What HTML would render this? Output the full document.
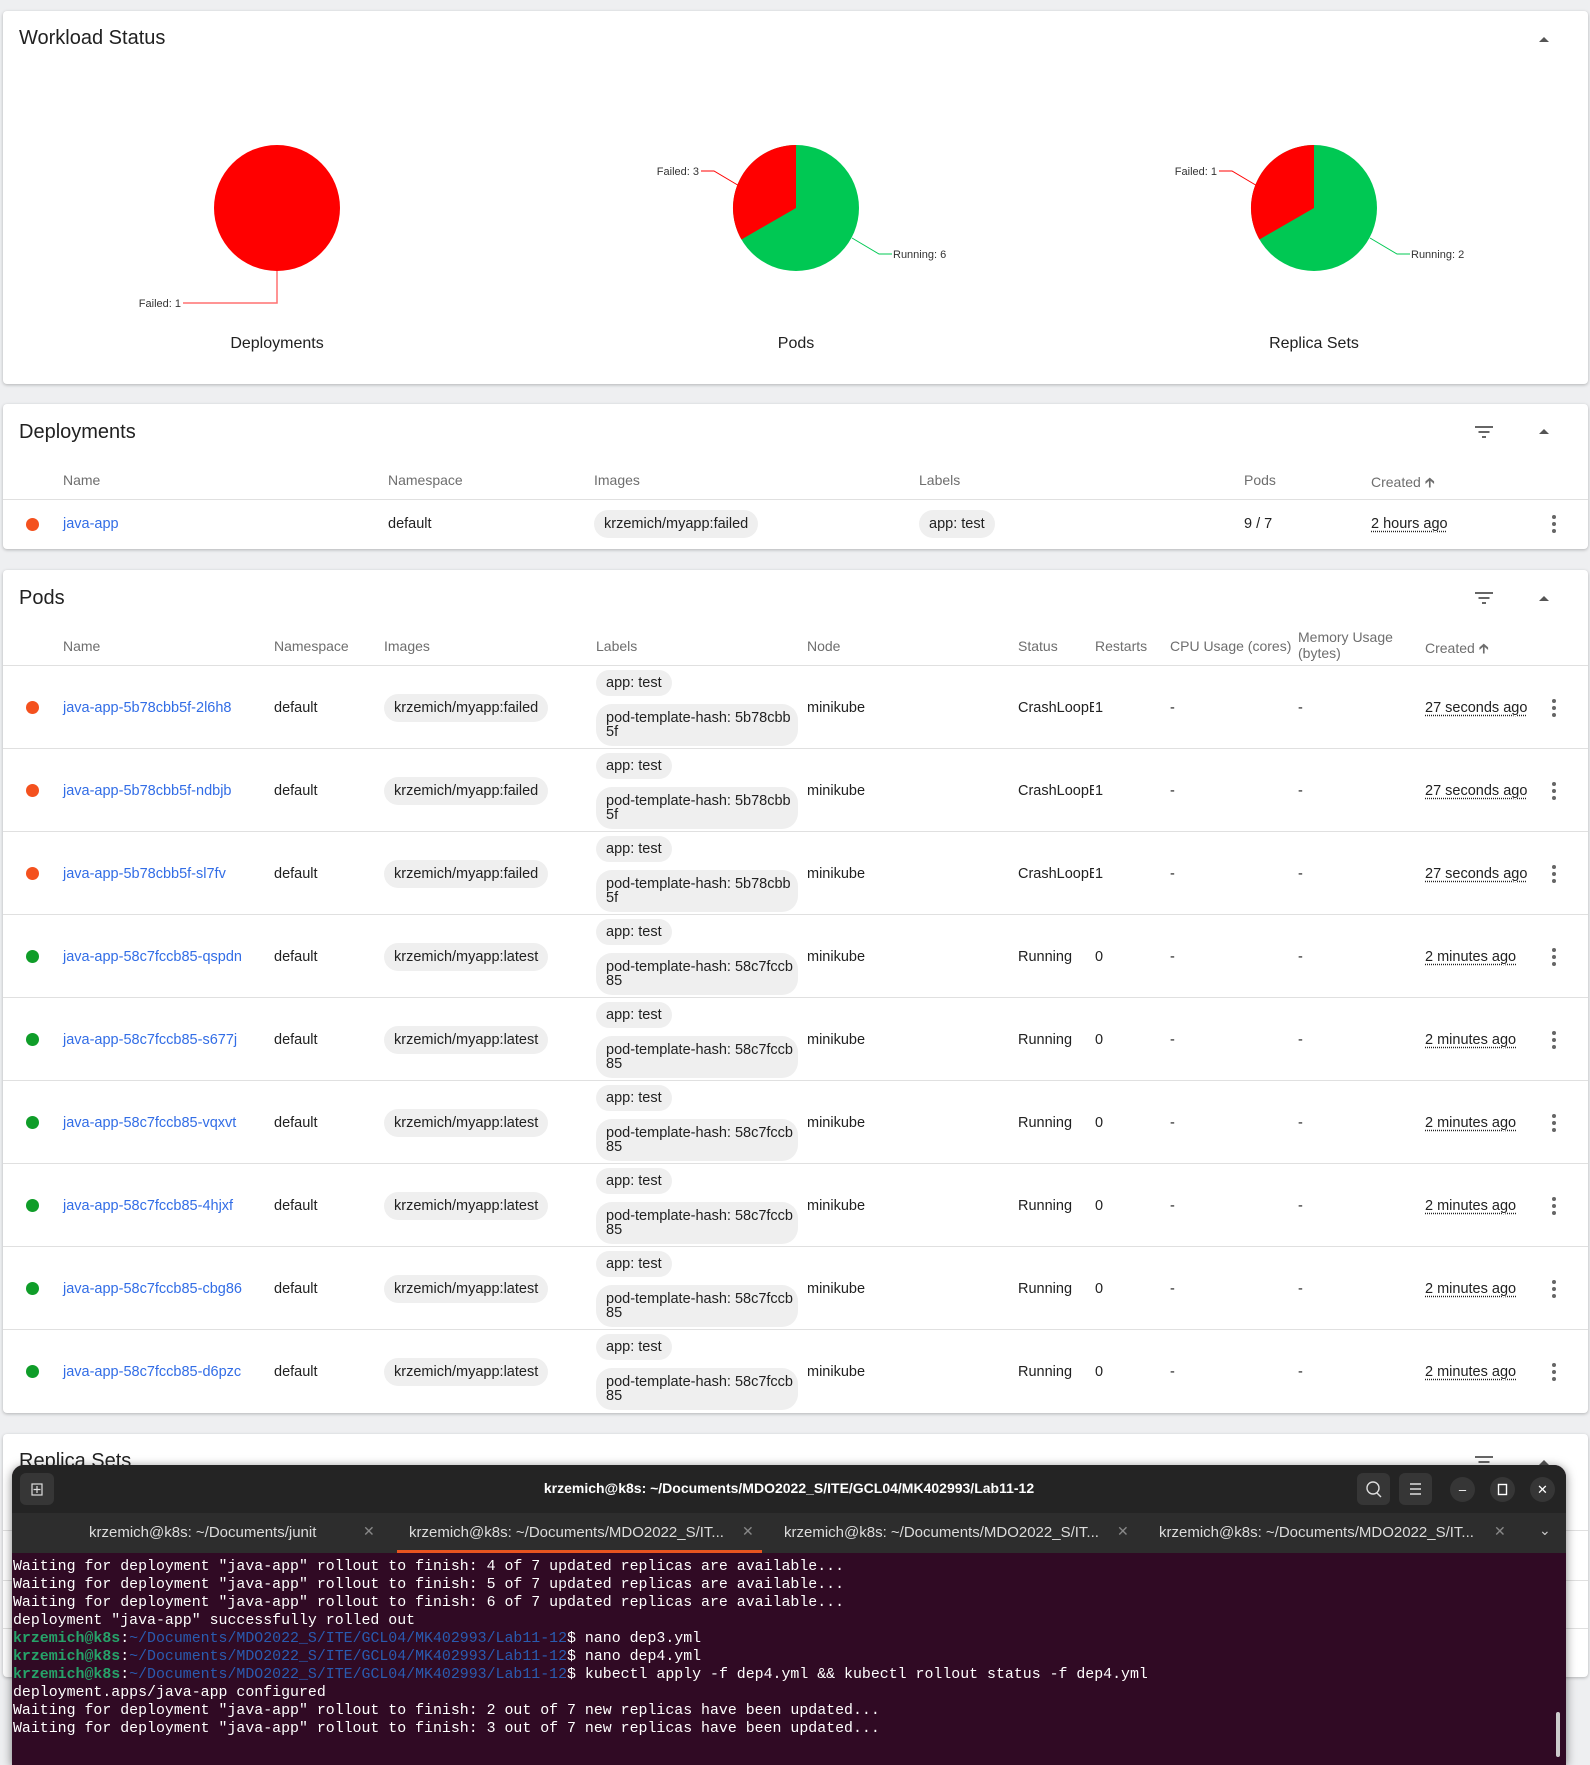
<!DOCTYPE html>
<html><head><meta charset="utf-8">
<style>
*{box-sizing:border-box;margin:0;padding:0}
body{width:1590px;height:1753px;background:#eeeff1;position:relative;overflow:hidden;font-family:"Liberation Sans",Arial,sans-serif;color:#212121}
.card{position:absolute;left:3px;width:1585px;background:#fff;border-radius:4px;box-shadow:0 1px 3px rgba(0,0,0,.25)}
.title{position:absolute;left:16px;font-size:20px;color:#212121}
.abs{position:absolute;white-space:nowrap}
.hd{position:absolute;font-size:14px;color:#6e6e6e;white-space:nowrap}
.div{position:absolute;left:0;right:0;height:1px;background:#e0e0e0}
.up{position:absolute;width:0;height:0;border-left:5px solid transparent;border-right:5px solid transparent;border-bottom:5px solid #555}
.filt{position:absolute;width:18px;height:12px}
.filt i{position:absolute;height:2px;background:#666;left:50%;transform:translateX(-50%)}
.row{position:absolute;left:0;width:1585px;height:83px;border-bottom:1px solid #e0e0e0;font-size:14.5px}
.row>div{position:absolute;white-space:nowrap}
.dot{width:13px;height:13px;border-radius:50%;left:23px;top:35px}
.red{background:#f4511e}.grn{background:#0f9d29}
.t{top:32px;line-height:20px}
.lnk{color:#326de6}
.chip{background:#efefef;border-radius:14px;padding:0 10px;line-height:28px;height:28px}
.kb{left:1549px;top:33px;width:4px;height:18px}
.kb i{display:block;width:4px;height:4px;border-radius:50%;background:#666;margin-bottom:3px}
.dt{text-decoration:underline dotted;text-underline-offset:3px}
.term{position:absolute;left:12px;top:1465px;width:1554px;height:300px;background:#300a24;border-radius:12px 12px 0 0;overflow:hidden;box-shadow:0 2px 10px rgba(0,0,0,.5)}
.tb{position:absolute;left:0;top:0;width:100%;height:48px;background:#242424}
.tabs{position:absolute;left:0;top:48px;width:100%;height:40px;background:#2d2d2d;color:#ddd;font-size:15px}
.tab{position:absolute;top:11px;white-space:nowrap}
.x{position:absolute;top:10px;color:#888;font-size:14px}
pre{position:absolute;left:1px;top:93px;font-family:"Liberation Mono",monospace;font-size:14.9px;line-height:18px;color:#fff}
.g{color:#26a269;font-weight:bold}.b{color:#2a5bb0}
.btn{position:absolute;top:8px;width:33px;height:32px;border-radius:6px;background:#363636}
.cb{position:absolute;top:12px;width:25px;height:25px;border-radius:50%;background:#363636;color:#fff;font-size:13px;text-align:center;line-height:25px}
</style></head><body>

<div class="card" style="top:11px;height:373px">
  <div class="title" style="top:16px">Workload Status</div>
  <div class="up" style="left:1536px;top:26px"></div>
  <svg class="abs" style="left:0;top:0" width="1585" height="373" font-family="Liberation Sans, Arial, sans-serif" font-size="11">
    <circle cx="274" cy="197" r="63" fill="#ff0000"/>
    <polyline points="274,260 274,292 180,292" fill="none" stroke="#ff7070" stroke-width="1.5"/>
    <text x="178" y="296" text-anchor="end" fill="#333">Failed: 1</text>
    <g transform="translate(793,197)">
      <circle r="63" fill="#00c853"/>
      <path d="M0,0 L0,-63 A63,63 0 0 0 -54.6,31.5 Z" fill="#ff0000"/>
      <polyline points="-55,-21 -82,-37 -95,-37" fill="none" stroke="#ff0000"/>
      <text x="-97" y="-33" text-anchor="end" fill="#333">Failed: 3</text>
      <polyline points="56,30 83,46 96,46" fill="none" stroke="#00c853"/>
      <text x="97" y="50" fill="#333">Running: 6</text>
    </g>
    <g transform="translate(1311,197)">
      <circle r="63" fill="#00c853"/>
      <path d="M0,0 L0,-63 A63,63 0 0 0 -54.6,31.5 Z" fill="#ff0000"/>
      <polyline points="-55,-21 -82,-37 -95,-37" fill="none" stroke="#ff0000"/>
      <text x="-97" y="-33" text-anchor="end" fill="#333">Failed: 1</text>
      <polyline points="56,30 83,46 96,46" fill="none" stroke="#00c853"/>
      <text x="97" y="50" fill="#333">Running: 2</text>
    </g>
    <g font-size="16" fill="#212121" text-anchor="middle">
      <text x="274" y="337">Deployments</text>
      <text x="793" y="337">Pods</text>
      <text x="1311" y="337">Replica Sets</text>
    </g>
  </svg>
</div>

<div class="card" style="top:404px;height:145px">
  <div class="title" style="top:17px">Deployments</div>
  <div class="filt" style="left:1472px;top:22px"><i style="top:0;width:18px"></i><i style="top:5px;width:11px"></i><i style="top:10px;width:4px"></i></div>
  <div class="up" style="left:1536px;top:25px"></div>
  <div class="hd" style="left:60px;top:68px">Name</div>
  <div class="hd" style="left:385px;top:68px">Namespace</div>
  <div class="hd" style="left:591px;top:68px">Images</div>
  <div class="hd" style="left:916px;top:68px">Labels</div>
  <div class="hd" style="left:1241px;top:68px">Pods</div>
  <div class="hd" style="left:1368px;top:68px">Created &#129137;</div>
  <div class="div" style="top:95px"></div>
  <div class="row" style="top:96px;height:49px;border-bottom:0">
    <div class="dot red" style="top:18px"></div>
    <div class="lnk" style="left:60px;top:14px;line-height:20px">java-app</div>
    <div style="left:385px;top:14px;line-height:20px">default</div>
    <div class="chip" style="left:591px;top:10px">krzemich/myapp:failed</div>
    <div class="chip" style="left:916px;top:10px">app: test</div>
    <div style="left:1241px;top:14px;line-height:20px">9 / 7</div>
    <div class="dt" style="left:1368px;top:14px;line-height:20px">2 hours ago</div>
    <div class="kb" style="top:15px"><i></i><i></i><i></i></div>
  </div>
</div>

<div class="card" style="top:570px;height:843px">
  <div class="title" style="top:17px">Pods</div>
  <div class="filt" style="left:1472px;top:22px"><i style="top:0;width:18px"></i><i style="top:5px;width:11px"></i><i style="top:10px;width:4px"></i></div>
  <div class="up" style="left:1536px;top:26px"></div>
  <div class="hd" style="left:60px;top:68px">Name</div>
  <div class="hd" style="left:271px;top:68px">Namespace</div>
  <div class="hd" style="left:381px;top:68px">Images</div>
  <div class="hd" style="left:593px;top:68px">Labels</div>
  <div class="hd" style="left:804px;top:68px">Node</div>
  <div class="hd" style="left:1015px;top:68px">Status</div>
  <div class="hd" style="left:1092px;top:68px">Restarts</div>
  <div class="hd" style="left:1167px;top:68px">CPU Usage (cores)</div>
  <div class="hd" style="left:1295px;top:59px;line-height:16px">Memory Usage<br>(bytes)</div>
  <div class="hd" style="left:1422px;top:68px">Created &#129137;</div>
  <div class="div" style="top:95px"></div>

  <div class="row" style="top:96px"><div class="dot red"></div><div class="t lnk" style="left:60px">java-app-5b78cbb5f-2l6h8</div><div class="t" style="left:271px">default</div><div class="chip" style="left:381px;top:28px">krzemich/myapp:failed</div><div class="chip" style="left:593px;top:4px;height:26px;line-height:26px">app: test</div><div class="chip" style="left:593px;top:38px;height:42px;line-height:14px;padding-top:7px;width:202px;border-radius:16px">pod-template-hash: 5b78cbb<br>5f</div><div class="t" style="left:804px">minikube</div><div class="t" style="left:1015px;width:76px;overflow:hidden">CrashLoopBackOff</div><div class="t" style="left:1092px">1</div><div class="t" style="left:1167px">-</div><div class="t" style="left:1295px">-</div><div class="t dt" style="left:1422px">27 seconds ago</div><div class="kb"><i></i><i></i><i></i></div></div>

  <div class="row" style="top:179px"><div class="dot red"></div><div class="t lnk" style="left:60px">java-app-5b78cbb5f-ndbjb</div><div class="t" style="left:271px">default</div><div class="chip" style="left:381px;top:28px">krzemich/myapp:failed</div><div class="chip" style="left:593px;top:4px;height:26px;line-height:26px">app: test</div><div class="chip" style="left:593px;top:38px;height:42px;line-height:14px;padding-top:7px;width:202px;border-radius:16px">pod-template-hash: 5b78cbb<br>5f</div><div class="t" style="left:804px">minikube</div><div class="t" style="left:1015px;width:76px;overflow:hidden">CrashLoopBackOff</div><div class="t" style="left:1092px">1</div><div class="t" style="left:1167px">-</div><div class="t" style="left:1295px">-</div><div class="t dt" style="left:1422px">27 seconds ago</div><div class="kb"><i></i><i></i><i></i></div></div>

  <div class="row" style="top:262px"><div class="dot red"></div><div class="t lnk" style="left:60px">java-app-5b78cbb5f-sl7fv</div><div class="t" style="left:271px">default</div><div class="chip" style="left:381px;top:28px">krzemich/myapp:failed</div><div class="chip" style="left:593px;top:4px;height:26px;line-height:26px">app: test</div><div class="chip" style="left:593px;top:38px;height:42px;line-height:14px;padding-top:7px;width:202px;border-radius:16px">pod-template-hash: 5b78cbb<br>5f</div><div class="t" style="left:804px">minikube</div><div class="t" style="left:1015px;width:76px;overflow:hidden">CrashLoopBackOff</div><div class="t" style="left:1092px">1</div><div class="t" style="left:1167px">-</div><div class="t" style="left:1295px">-</div><div class="t dt" style="left:1422px">27 seconds ago</div><div class="kb"><i></i><i></i><i></i></div></div>

  <div class="row" style="top:345px"><div class="dot grn"></div><div class="t lnk" style="left:60px">java-app-58c7fccb85-qspdn</div><div class="t" style="left:271px">default</div><div class="chip" style="left:381px;top:28px">krzemich/myapp:latest</div><div class="chip" style="left:593px;top:4px;height:26px;line-height:26px">app: test</div><div class="chip" style="left:593px;top:38px;height:42px;line-height:14px;padding-top:7px;width:202px;border-radius:16px">pod-template-hash: 58c7fccb<br>85</div><div class="t" style="left:804px">minikube</div><div class="t" style="left:1015px">Running</div><div class="t" style="left:1092px">0</div><div class="t" style="left:1167px">-</div><div class="t" style="left:1295px">-</div><div class="t dt" style="left:1422px">2 minutes ago</div><div class="kb"><i></i><i></i><i></i></div></div>

  <div class="row" style="top:428px"><div class="dot grn"></div><div class="t lnk" style="left:60px">java-app-58c7fccb85-s677j</div><div class="t" style="left:271px">default</div><div class="chip" style="left:381px;top:28px">krzemich/myapp:latest</div><div class="chip" style="left:593px;top:4px;height:26px;line-height:26px">app: test</div><div class="chip" style="left:593px;top:38px;height:42px;line-height:14px;padding-top:7px;width:202px;border-radius:16px">pod-template-hash: 58c7fccb<br>85</div><div class="t" style="left:804px">minikube</div><div class="t" style="left:1015px">Running</div><div class="t" style="left:1092px">0</div><div class="t" style="left:1167px">-</div><div class="t" style="left:1295px">-</div><div class="t dt" style="left:1422px">2 minutes ago</div><div class="kb"><i></i><i></i><i></i></div></div>

  <div class="row" style="top:511px"><div class="dot grn"></div><div class="t lnk" style="left:60px">java-app-58c7fccb85-vqxvt</div><div class="t" style="left:271px">default</div><div class="chip" style="left:381px;top:28px">krzemich/myapp:latest</div><div class="chip" style="left:593px;top:4px;height:26px;line-height:26px">app: test</div><div class="chip" style="left:593px;top:38px;height:42px;line-height:14px;padding-top:7px;width:202px;border-radius:16px">pod-template-hash: 58c7fccb<br>85</div><div class="t" style="left:804px">minikube</div><div class="t" style="left:1015px">Running</div><div class="t" style="left:1092px">0</div><div class="t" style="left:1167px">-</div><div class="t" style="left:1295px">-</div><div class="t dt" style="left:1422px">2 minutes ago</div><div class="kb"><i></i><i></i><i></i></div></div>

  <div class="row" style="top:594px"><div class="dot grn"></div><div class="t lnk" style="left:60px">java-app-58c7fccb85-4hjxf</div><div class="t" style="left:271px">default</div><div class="chip" style="left:381px;top:28px">krzemich/myapp:latest</div><div class="chip" style="left:593px;top:4px;height:26px;line-height:26px">app: test</div><div class="chip" style="left:593px;top:38px;height:42px;line-height:14px;padding-top:7px;width:202px;border-radius:16px">pod-template-hash: 58c7fccb<br>85</div><div class="t" style="left:804px">minikube</div><div class="t" style="left:1015px">Running</div><div class="t" style="left:1092px">0</div><div class="t" style="left:1167px">-</div><div class="t" style="left:1295px">-</div><div class="t dt" style="left:1422px">2 minutes ago</div><div class="kb"><i></i><i></i><i></i></div></div>

  <div class="row" style="top:677px"><div class="dot grn"></div><div class="t lnk" style="left:60px">java-app-58c7fccb85-cbg86</div><div class="t" style="left:271px">default</div><div class="chip" style="left:381px;top:28px">krzemich/myapp:latest</div><div class="chip" style="left:593px;top:4px;height:26px;line-height:26px">app: test</div><div class="chip" style="left:593px;top:38px;height:42px;line-height:14px;padding-top:7px;width:202px;border-radius:16px">pod-template-hash: 58c7fccb<br>85</div><div class="t" style="left:804px">minikube</div><div class="t" style="left:1015px">Running</div><div class="t" style="left:1092px">0</div><div class="t" style="left:1167px">-</div><div class="t" style="left:1295px">-</div><div class="t dt" style="left:1422px">2 minutes ago</div><div class="kb"><i></i><i></i><i></i></div></div>

  <div class="row" style="top:760px;border-bottom:0"><div class="dot grn"></div><div class="t lnk" style="left:60px">java-app-58c7fccb85-d6pzc</div><div class="t" style="left:271px">default</div><div class="chip" style="left:381px;top:28px">krzemich/myapp:latest</div><div class="chip" style="left:593px;top:4px;height:26px;line-height:26px">app: test</div><div class="chip" style="left:593px;top:38px;height:42px;line-height:14px;padding-top:7px;width:202px;border-radius:16px">pod-template-hash: 58c7fccb<br>85</div><div class="t" style="left:804px">minikube</div><div class="t" style="left:1015px">Running</div><div class="t" style="left:1092px">0</div><div class="t" style="left:1167px">-</div><div class="t" style="left:1295px">-</div><div class="t dt" style="left:1422px">2 minutes ago</div><div class="kb"><i></i><i></i><i></i></div></div>
</div>

<div class="card" style="top:1434px;height:243px">
  <div class="title" style="top:16px">Replica Sets</div>
  <div class="filt" style="left:1472px;top:22px"><i style="top:0;width:18px"></i><i style="top:5px;width:11px"></i><i style="top:10px;width:4px"></i></div>
  <div class="up" style="left:1536px;top:26px"></div>
  <div class="div" style="top:96px"></div>
  <div class="div" style="top:146px"></div>
  <div class="div" style="top:194px"></div>
</div>

<div class="term">
  <div class="tb">
    <div class="btn" style="left:8px;top:8px;width:34px"><svg width="34" height="32"><rect x="12" y="11" width="10" height="11" fill="none" stroke="#ddd" stroke-width="1.2"/><path d="M17 13v7M13.5 16.5h7" stroke="#ddd" stroke-width="1.2"/></svg></div>
    <div class="abs" style="left:0;width:1554px;text-align:center;top:15px;color:#fff;font-weight:bold;font-size:14px">krzemich@k8s: ~/Documents/MDO2022_S/ITE/GCL04/MK402993/Lab11-12</div>
    <div class="btn" style="left:1345px"><svg width="33" height="32"><circle cx="16" cy="15" r="6" fill="none" stroke="#ddd" stroke-width="1.4"/><path d="M20 20l4 4" stroke="#ddd" stroke-width="1.4"/></svg></div>
    <div class="btn" style="left:1387px"><svg width="33" height="32"><path d="M11 11h11M11 16h11M11 21h11" stroke="#ddd" stroke-width="1.4"/></svg></div>
    <div class="cb" style="left:1438px">&#8211;</div>
    <div class="cb" style="left:1478px"><svg width="25" height="25"><rect x="8.5" y="7.5" width="8" height="10" fill="none" stroke="#fff" stroke-width="1.4"/></svg></div>
    <div class="cb" style="left:1518px">&#10005;</div>
  </div>
  <div class="tabs">
    <div class="tab" style="left:77px">krzemich@k8s: ~/Documents/junit</div><div class="x" style="left:351px">&#10005;</div>
    <div class="tab" style="left:397px">krzemich@k8s: ~/Documents/MDO2022_S/IT...</div><div class="x" style="left:730px">&#10005;</div>
    <div class="abs" style="left:385px;top:37px;width:365px;height:3px;background:#e95420"></div>
    <div class="tab" style="left:772px">krzemich@k8s: ~/Documents/MDO2022_S/IT...</div><div class="x" style="left:1105px">&#10005;</div>
    <div class="tab" style="left:1147px">krzemich@k8s: ~/Documents/MDO2022_S/IT...</div><div class="x" style="left:1482px">&#10005;</div>
    <div class="abs" style="left:1527px;top:9px;color:#ccc;font-size:14px">&#8964;</div>
  </div>
<pre>Waiting for deployment "java-app" rollout to finish: 4 of 7 updated replicas are available...
Waiting for deployment "java-app" rollout to finish: 5 of 7 updated replicas are available...
Waiting for deployment "java-app" rollout to finish: 6 of 7 updated replicas are available...
deployment "java-app" successfully rolled out
<span class="g">krzemich@k8s</span>:<span class="b">~/Documents/MDO2022_S/ITE/GCL04/MK402993/Lab11-12</span>$ nano dep3.yml
<span class="g">krzemich@k8s</span>:<span class="b">~/Documents/MDO2022_S/ITE/GCL04/MK402993/Lab11-12</span>$ nano dep4.yml
<span class="g">krzemich@k8s</span>:<span class="b">~/Documents/MDO2022_S/ITE/GCL04/MK402993/Lab11-12</span>$ kubectl apply -f dep4.yml &amp;&amp; kubectl rollout status -f dep4.yml
deployment.apps/java-app configured
Waiting for deployment "java-app" rollout to finish: 2 out of 7 new replicas have been updated...
Waiting for deployment "java-app" rollout to finish: 3 out of 7 new replicas have been updated...</pre>
  <div class="abs" style="left:1544px;top:247px;width:4px;height:45px;border-radius:2px;background:#ccc"></div>
</div>
</body></html>
